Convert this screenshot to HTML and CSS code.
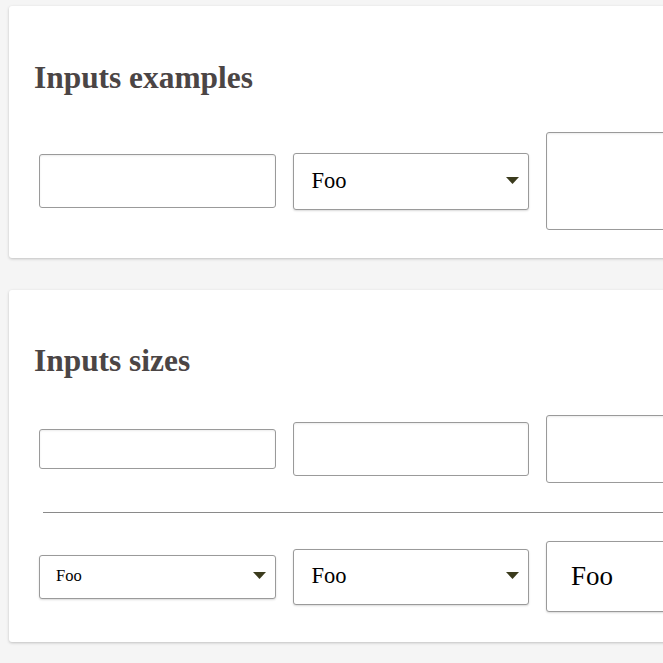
FILE: index.html
```html
<!DOCTYPE html>
<html lang="en">
<head>
<meta charset="utf-8">
<title>Inputs</title>
<link rel="stylesheet" href="styles.css">
</head>
<body>
<section class="card">
  <h2 class="card-title">Inputs examples</h2>
  <div class="row">
    <input class="field field-md" type="text">
    <div class="select select-md" role="combobox" tabindex="0">
      <span class="select-value">Foo</span>
      <svg class="arrow" width="13" height="7" viewBox="0 0 13 7"><path d="M0 0H13L6.5 7Z" fill="#3b3b1d"/></svg>
    </div>
    <textarea class="field area"></textarea>
  </div>
</section>
<section class="card card-second">
  <h2 class="card-title">Inputs sizes</h2>
  <div class="row">
    <input class="field field-sm" type="text">
    <input class="field field-md" type="text">
    <input class="field field-lg" type="text">
  </div>
  <hr class="divider">
  <div class="row row-last">
    <div class="select select-sm" role="combobox" tabindex="0">
      <span class="select-value">Foo</span>
      <svg class="arrow" width="13" height="7" viewBox="0 0 13 7"><path d="M0 0H13L6.5 7Z" fill="#3b3b1d"/></svg>
    </div>
    <div class="select select-md2" role="combobox" tabindex="0">
      <span class="select-value">Foo</span>
      <svg class="arrow" width="13" height="7" viewBox="0 0 13 7"><path d="M0 0H13L6.5 7Z" fill="#3b3b1d"/></svg>
    </div>
    <div class="select select-lg" role="combobox" tabindex="0">
      <span class="select-value">Foo</span>
      <svg class="arrow" width="13" height="7" viewBox="0 0 13 7"><path d="M0 0H13L6.5 7Z" fill="#3b3b1d"/></svg>
    </div>
  </div>
</section>
</body>
</html>
```
FILE: styles.css
```css
html, body {
  margin: 0;
  overflow: hidden;
}
body {
  background: #f5f5f5;
  padding: 6px 0 20px 9px;
  font-family: "Liberation Serif", "Times New Roman", serif;
  font-size: 18px;
  width: 900px;
}
.card {
  background: #fff;
  border-radius: 3px;
  box-shadow: 0 1px 3px rgba(0, 0, 0, 0.22);
  width: 820px;
  box-sizing: border-box;
  padding: 54px 25px 28px 25px;
}
.card-second {
  margin-top: 32px;
  padding-top: 53px;
}
.card-title {
  margin: 0 0 36px 0;
  font-size: 31.4px;
  line-height: 36px;
  font-weight: bold;
  color: #4b4545;
}
.row {
  display: flex;
  align-items: center;
  gap: 17px;
  padding-left: 5px;
}
.row-last {
  margin-bottom: 2px;
}
.field {
  box-sizing: border-box;
  width: 236.5px;
  flex: none;
  border: 1px solid #9a9a9a;
  border-radius: 3px;
  background: #fff;
  box-shadow: inset 0 1px 2px rgba(0, 0, 0, 0.08);
  margin: 0;
  padding: 0 16px;
  font-family: inherit;
  font-size: 22.5px;
  outline: none;
}
.field-sm { height: 40px; }
.field-md { height: 54px; }
.field-lg { height: 68px; }
.area {
  height: 98px;
  resize: none;
  display: block;
}
.divider {
  border: 0;
  border-top: 1px solid #8a8a8a;
  margin: 29px -40px 28px 9px;
}
.select {
  box-sizing: border-box;
  width: 236.5px;
  flex: none;
  display: flex;
  align-items: center;
  justify-content: space-between;
  border: 1px solid #9a9a9a;
  border-radius: 3px;
  background: #fff;
  box-shadow: 0 1px 2px rgba(0, 0, 0, 0.15);
  color: #000;
  padding-right: 9px;
  outline: none;
  cursor: pointer;
}
.select-value {
  line-height: 1;
}
.arrow {
  flex: none;
  margin-top: -2px;
}
.select-md {
  height: 57px;
  font-size: 22.5px;
  padding-left: 18px;
}
.select-md2 {
  height: 56px;
  font-size: 22.5px;
  padding-left: 18px;
}
.select-sm {
  height: 44px;
  font-size: 16.5px;
  padding-left: 16px;
}
.select-lg {
  height: 71px;
  font-size: 27px;
  padding-left: 24px;
}
```
